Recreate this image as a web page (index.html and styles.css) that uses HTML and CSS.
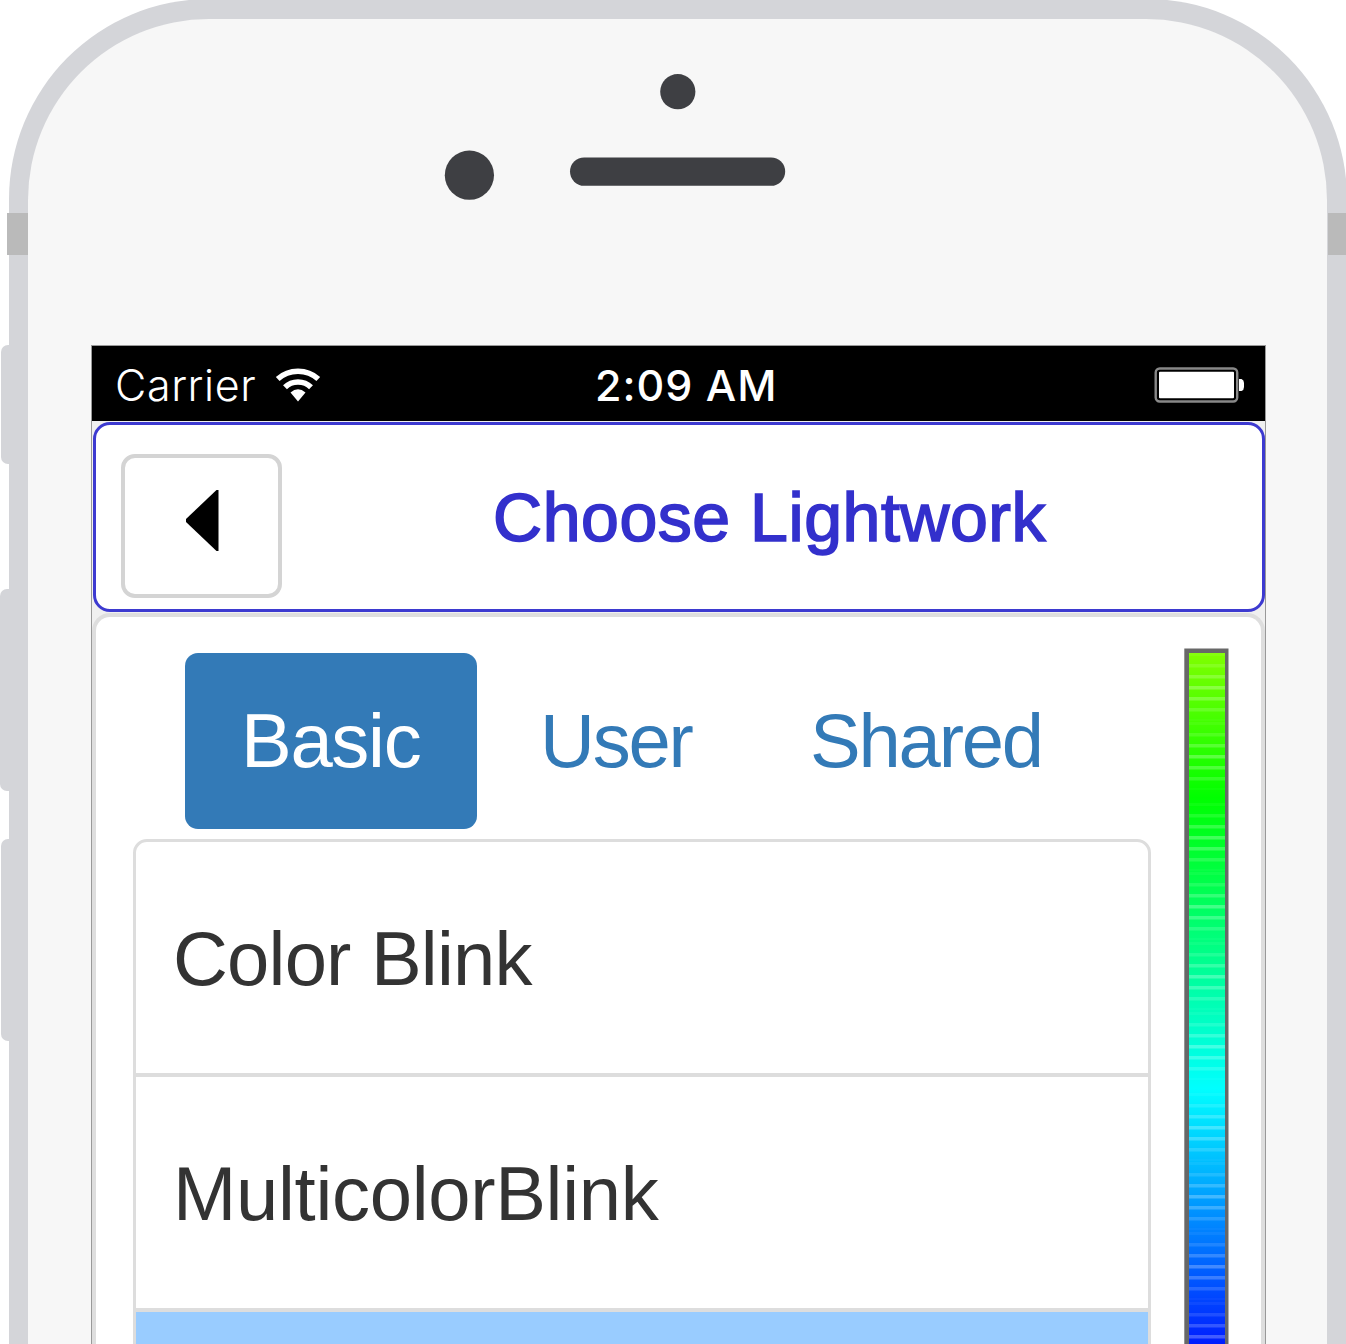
FILE: index.html
```html
<!DOCTYPE html>
<html lang="en">
<head>
<meta charset="utf-8">
<title>Choose Lightwork</title>
<link rel="stylesheet" href="styles.css">
</head>
<body>
<div class="phone">
  <span class="side-key mute"></span>
  <span class="side-key volume-up"></span>
  <span class="side-key volume-down"></span>
  <span class="antenna antenna-left"></span>
  <span class="antenna antenna-right"></span>
  <div class="face">
    <svg class="sensors" width="1299" height="326" viewBox="28 19 1299 326" aria-hidden="true">
      <circle cx="677.8" cy="91.7" r="17.6"/>
      <circle cx="469.4" cy="175.2" r="24.6"/>
      <rect x="570" y="157.4" width="215.2" height="28.4" rx="14.2"/>
    </svg>
    <main class="screen">
      <div class="status">
        <span class="carrier">Carrier</span>
        <svg class="wifi" width="46" height="36" viewBox="0 0 46 36" aria-hidden="true">
          <path class="wave" d="M2.7 11C14 .6 32 .6 43.3 11M10 19.2C17 12.2 29 12.2 36 19.2"/>
          <path d="M15.5 24.5Q23 18 30.5 24.5L23 33.5Z"/>
        </svg>
        <span class="clock">2:09 AM</span>
        <svg class="battery" width="91" height="37" viewBox="0 0 91 37" aria-hidden="true">
          <rect class="shell" x="1.7" y="1.5" width="81.5" height="33" rx="4"/>
          <rect x="5" y="4.8" width="75" height="26.5" rx="1"/>
          <path d="M85 12h2.5q2.5 1 2.5 4v4q0 3-2.5 4h-2.5z"/>
        </svg>
      </div>
      <header class="titlebar">
        <button class="back" aria-label="Back"><svg width="33" height="61" viewBox="0 0 33 61"><path d="M32.5 0V61H30.5L0 32V29L30.5 0Z"/></svg></button>
        <h1 class="title">Choose Lightwork</h1>
      </header>
      <section class="panel">
        <div class="library">
          <nav class="tabs">
            <a class="tab active">Basic</a>
            <a class="tab user">User</a>
            <a class="tab shared">Shared</a>
          </nav>
          <ul class="list">
            <li class="row">Color Blink</li>
            <li class="row multi">MulticolorBlink</li>
            <li class="row selected"></li>
          </ul>
        </div>
        <svg class="spectrum" width="45" height="740" viewBox="1184 648 45 740" aria-hidden="true">
          <defs>
            <linearGradient id="hues" gradientUnits="userSpaceOnUse" x1="0" y1="653" x2="0" y2="1377">
              <stop offset="0" stop-color="#80ff00"/>
              <stop offset=".2" stop-color="#00ff00"/>
              <stop offset=".602" stop-color="#00ffff"/>
              <stop offset="1" stop-color="#0000ff"/>
            </linearGradient>
            <g id="bands" fill="#fff">
              <rect x="1189" y="-13" width="36" height="3" opacity=".05"/>
              <rect x="1189" y="-2" width="36" height="3.5" opacity=".12"/>
              <rect x="1189" y="9" width="36" height="3.5" opacity=".2"/>
              <rect x="1189" y="20" width="36" height="3.5" opacity=".26"/>
              <rect x="1189" y="31" width="36" height="3.5" opacity=".23"/>
              <rect x="1189" y="42" width="36" height="3.5" opacity=".15"/>
              <rect x="1189" y="53" width="36" height="2" opacity=".03"/>
            </g>
          </defs>
          <rect x="1184.3" y="648.5" width="44.2" height="750" fill="#686868"/>
          <rect x="1189" y="653" width="36" height="740" fill="url(#hues)"/>
          <use href="#bands" y="666"/><use href="#bands" y="735"/><use href="#bands" y="816"/>
          <use href="#bands" y="885"/><use href="#bands" y="955"/><use href="#bands" y="1025"/>
          <use href="#bands" y="1106"/><use href="#bands" y="1175"/><use href="#bands" y="1245"/>
          <use href="#bands" y="1315"/>
        </svg>
      </section>
    </main>
  </div>
</div>
</body>
</html>
```
FILE: styles.css
```css
* { box-sizing: border-box; }
html, body { margin: 0; height: 1344px; overflow: hidden; background: #fff; }
body { font-family: "Liberation Sans", Arial, sans-serif; }

.phone {
  position: relative;
  width: 1338px;
  height: 1345px;
  margin: -1px 0 0 8.5px;
  padding: 19.5px 19.5px 0;
  background: #d4d5d9;
  border-radius: 200px 200px 0 0;
}
.face {
  height: 1325.5px;
  overflow: hidden;
  background: #f7f7f7;
  border-radius: 181px 181px 0 0;
}
.side-key {
  position: absolute;
  left: -7.5px;
  width: 12px;
  background: #d4d5d9;
  border-radius: 7px 0 0 7px;
}
.mute { top: 346px; height: 119px; }
.volume-up { top: 589.5px; height: 202px; left: -8.5px; }
.volume-down { top: 840px; height: 202px; }
.antenna {
  position: absolute;
  top: 214.3px;
  height: 41.7px;
  width: 21px;
  background: #bababa;
}
.antenna-left { left: -1.5px; }
.antenna-right { right: -2px; }
.sensors { display: block; fill: #3e3f43; }

.screen {
  display: flex;
  flex-direction: column;
  width: 1175px;
  height: 999px;
  margin-left: 63px;
  border: 1px solid #999;
  border-bottom: 0;
  background: #f0f0f0;
}
.status {
  display: flex;
  flex: none;
  align-items: center;
  height: 75px;
  padding: 5px 20px 0 23px;
  background: #000;
  color: #fff;
  fill: #fff;
  font: 500 43px/75px Inter, sans-serif;
}
.carrier { width: 160px; font-weight: 300; letter-spacing: .6px; }
.wave { fill: none; stroke: #fff; stroke-width: 5.5px; }
.clock { margin-left: 274px; letter-spacing: 1px; white-space: nowrap; }
.battery { margin-left: auto; }
.shell { fill: #000; stroke: #888; stroke-width: 2.4px; }

.titlebar {
  display: flex;
  flex: none;
  height: 190px;
  margin: 1px 0 0 1px;
  padding: 29px 0 0 25px;
  border: 3px solid #3d3ad0;
  border-radius: 17px;
  background: #fff;
}
.back {
  display: flex;
  width: 161px;
  height: 144px;
  padding: 0 0 10px 61px;
  align-items: center;
  border: 4px solid #d4d4d4;
  border-radius: 14px;
  background: #fff;
}
.title {
  margin: 23px 0 0 211px;
  color: #3330cc;
  font-size: 68px;
  font-weight: 400;
  line-height: 80px;
  letter-spacing: .55px;
  white-space: nowrap;
  -webkit-text-stroke: 1.7px #3330cc;
}
.panel {
  display: flex;
  flex: 1;
  min-height: 0;
  margin-top: 1px;
  padding: 31px 32px 0 37px;
  justify-content: space-between;
  border: 4px solid #dedede;
  border-bottom: 0;
  border-radius: 18px 18px 0 0;
  background: #fff;
  overflow: hidden;
}
.library { width: 1018px; padding-top: 5px; }
.spectrum { display: block; flex: none; }
.tabs { display: flex; margin-left: 52px; }
.tab {
  height: 176px;
  color: #337ab7;
  font-size: 76px;
  line-height: 176px;
  letter-spacing: -2.2px;
  white-space: nowrap;
}
.active { width: 292px; padding-left: 56px; border-radius: 13px; color: #fff; background: #337ab7; letter-spacing: -1.3px; }
.user { width: 269px; padding-left: 63px; }
.shared { padding-left: 64px; }
.list {
  height: 800px;
  margin: 10px 0 0;
  padding: 0;
  list-style: none;
  border: 3px solid #ddd;
  border-radius: 14px 14px 0 0;
  overflow: hidden;
}
.row {
  height: 235px;
  padding-left: 37px;
  border-bottom: 4px solid #ddd;
  color: #333;
  font-size: 76px;
  line-height: 233px;
  letter-spacing: -.8px;
}
.multi { letter-spacing: -.3px; }
.selected { background: #99ccff; }
```
